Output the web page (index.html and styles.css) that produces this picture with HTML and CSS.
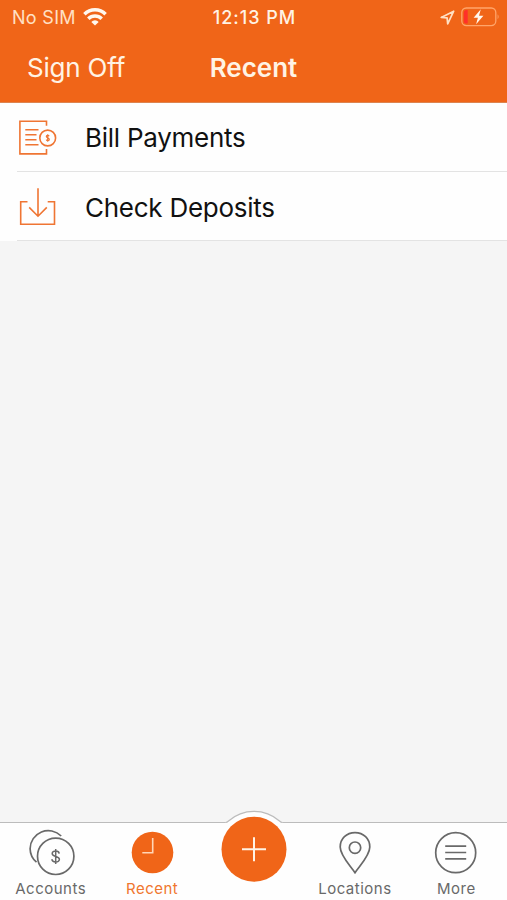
FILE: index.html
```html
<!DOCTYPE html>
<html lang="en">
<head>
<meta charset="utf-8">
<title>Recent</title>
<link rel="stylesheet" href="styles.css">
</head>
<body>
<div class="app">
  <header class="header">
    <div class="status">
      <div class="status-left">
        <span class="carrier">No SIM</span>
        <svg class="wifi" width="24" height="18" viewBox="0 0 24 18" fill="none" stroke="#fff8ee" stroke-width="3.500">
          <path d="M1.400 6.200a15 15 0 0 1 21.200 0"/>
          <path d="M5.300 10.700a9.500 9.500 0 0 1 13.400 0"/>
          <path d="M12 17.600l-3.700-3.700a5.200 5.200 0 0 1 7.400 0z" fill="#fff8ee" stroke="none"/>
        </svg>
      </div>
      <span class="clock">12:13 PM</span>
      <div class="status-right">
        <svg width="15" height="15" viewBox="0 0 15 15" fill="none" stroke="#ffe0c4" stroke-width="1.700" stroke-linejoin="round"><path d="M13.700 1.200L1.200 7.400l5.900.5.6 5.900z"/></svg>
        <svg width="38" height="20" viewBox="0 0 38 20">
          <rect x=".8" y="1" width="34" height="17.600" rx="4.500" fill="none" stroke="#ffa56a" stroke-width="1.300"/>
          <path d="M36.600 7.200q2 2.500 0 5z" fill="#ffa56a"/>
          <path d="M5.500 3H6.700v13.600H5.500a2.700 2.700 0 0 1-2.700-2.700V5.700A2.700 2.700 0 0 1 5.500 3z" fill="#ff3028"/>
          <path d="M19.800 2.300L12.600 10.700h4.300L15.100 17.300l7.300-8.500h-4.400z" fill="#fff8ee"/>
        </svg>
      </div>
    </div>
    <nav class="nav">
      <span class="sign-off">Sign Off</span>
      <h1 class="title">Recent</h1>
    </nav>
  </header>
  <main class="list">
    <div class="row">
      <svg class="row-icon" width="40" height="40" viewBox="0 0 40 40" fill="none" stroke="#ef7533" stroke-width="1.600">
        <path d="M28.500 7.700V3.200H1.900V35.900H28.500V31"/>
        <path d="M7.300 11.800H20.500M7.300 16.800H18.500M7.300 21.800H18.500M7.300 26.800H20.500"/>
        <circle cx="29.700" cy="20" r="7.900"/>
        <path d="M31.100 18.200c-.4-1.300-2.800-1.300-2.800.2 0 1.700 3 1.300 3 3.100 0 1.500-2.600 1.600-3 .1M29.700 16.300v7.400" stroke-width="1.200"/>
      </svg>
      <span>Bill Payments</span>
    </div>
    <div class="row">
      <svg class="row-icon" width="40" height="40" viewBox="0 0 40 40" fill="none" stroke="#ef7533" stroke-width="1.600">
        <path d="M9.500 14.700H2.700V37.300H36.500V14.700H29.700"/>
        <path d="M20 1.200V29.200M11.200 20.400L20 29.200L28.800 20.400"/>
      </svg>
      <span>Check Deposits</span>
    </div>
  </main>
  <footer class="tabs">
    <div class="tab">
      <svg width="48" height="48" viewBox="0 0 48 48" fill="none" stroke="#696969" stroke-width="1.700">
        <path d="M9.500 31.200A18.200 18.200 0 0 1 3.100 17.700A18.200 18.200 0 0 1 34.200 5"/>
        <circle cx="28.700" cy="25.300" r="18.200"/>
        <path d="M32.200 22.600c-.3-3.400-7-3.500-7 0 0 3.800 7.200 2 7.200 5.700 0 3.600-7.300 3.500-7.500-.2M28.700 18.100v15" stroke-width="1.500"/>
      </svg>
      <span>Accounts</span>
    </div>
    <div class="tab active">
      <svg width="48" height="48" viewBox="0 0 48 48">
        <circle cx="24.500" cy="21.500" r="20.800" fill="#f06518"/>
        <path d="M24.700 7v14.700H14.300" fill="none" stroke="#ffd6b7" stroke-width="1.600"/>
      </svg>
      <span>Recent</span>
    </div>
    <div class="tab tab-add">
      <svg class="add" width="82" height="76" viewBox="0 0 82 76">
        <path d="M12.500 13.500Q14 13.500 15.500 12A38.500 38.500 0 0 1 66.500 12Q68 13.500 69.500 13.500V16H12.500z" fill="#fefefe"/>
        <path d="M12.500 13.500Q14 13.500 15.500 12A38.500 38.500 0 0 1 66.500 12Q68 13.500 69.500 13.500" fill="none" stroke="#bcbcbc" stroke-width="1.200"/>
        <circle cx="41" cy="40.200" r="32.500" fill="#f06518"/>
        <path d="M29 40.300H53M41 28.300V52.300" stroke="#fff3e4" stroke-width="2"/>
      </svg>
    </div>
    <div class="tab">
      <svg width="48" height="48" viewBox="0 0 48 48" fill="none" stroke="#696969" stroke-width="1.700">
        <path d="M24 41.700C19 34.200 9.200 24.700 9.200 16C9.200 7.700 15.500 1.600 24 1.600S38.800 7.700 38.800 16C38.800 24.700 29 34.200 24 41.700z"/>
        <circle cx="24" cy="16.700" r="5.700"/>
      </svg>
      <span>Locations</span>
    </div>
    <div class="tab">
      <svg width="48" height="48" viewBox="0 0 48 48" fill="none" stroke="#696969" stroke-width="1.700">
        <circle cx="23.700" cy="21.700" r="20"/>
        <path d="M13.200 15.200H34.200M13.200 21.500H34.200M13.200 27.900H34.200"/>
      </svg>
      <span>More</span>
    </div>
  </footer>
</div>
</body>
</html>
```
FILE: styles.css
```css
* { box-sizing: border-box; }

body {
  margin: 0;
  font-family: Inter, "Liberation Sans", sans-serif;
}

svg { overflow: visible; }

.app {
  display: flex;
  flex-direction: column;
  width: 507px;
  height: 900px;
  background: #f5f5f5;
}

.header {
  height: 103px;
  background: #f06518;
  border-bottom: 1px solid #dc8450;
  color: #fff3e4;
}

.status {
  display: grid;
  grid-template-columns: 1fr auto 1fr;
  align-items: center;
  height: 34px;
  padding: 0 8px 0 12px;
  font-size: 18px;
}

.status-left,
.status-right {
  display: flex;
  align-items: center;
  gap: 7px;
}

.carrier { color: #ffe0c4; letter-spacing: 0.3px; }
.clock { margin-left: -2px; font-weight: 500; letter-spacing: 1px; }
.status-right { justify-content: flex-end; gap: 6px; }

.nav {
  display: grid;
  grid-template-columns: 1fr auto 1fr;
  align-items: center;
  height: 66px;
  padding: 0 26px;
  font-size: 26px;
}

.sign-off { padding-left: 1px; letter-spacing: -0.2px; }
.title { margin: 0; font-size: 26px; font-weight: 600; }

.list { flex: 1; }

.row {
  display: flex;
  align-items: center;
  gap: 27px;
  height: 69px;
  padding-left: 18px;
  color: #111;
  font-size: 26px;
  letter-spacing: -0.26px;
  background: linear-gradient(#e3e3e3, #e3e3e3) 17px 100% / 100% 1px no-repeat #fefefe;
}

.row + .row { padding-top: 1px; }

.tabs {
  display: grid;
  grid-template-columns: repeat(5, 1fr);
  height: 78px;
  border-top: 1px solid #bcbcbc;
  background: #fefefe;
  color: #696969;
  font-size: 15px;
  letter-spacing: 0.5px;
}

.tab {
  display: flex;
  flex-direction: column;
  align-items: center;
  padding-top: 8px;
}

.tab span { line-height: 20px; }
.active { color: #f0762f; }
.tab-add { position: relative; }

/* The add button rises above the bar's top edge. */
.add {
  position: absolute;
  top: -14px;
  left: calc(50% - 40.5px);
}
```
